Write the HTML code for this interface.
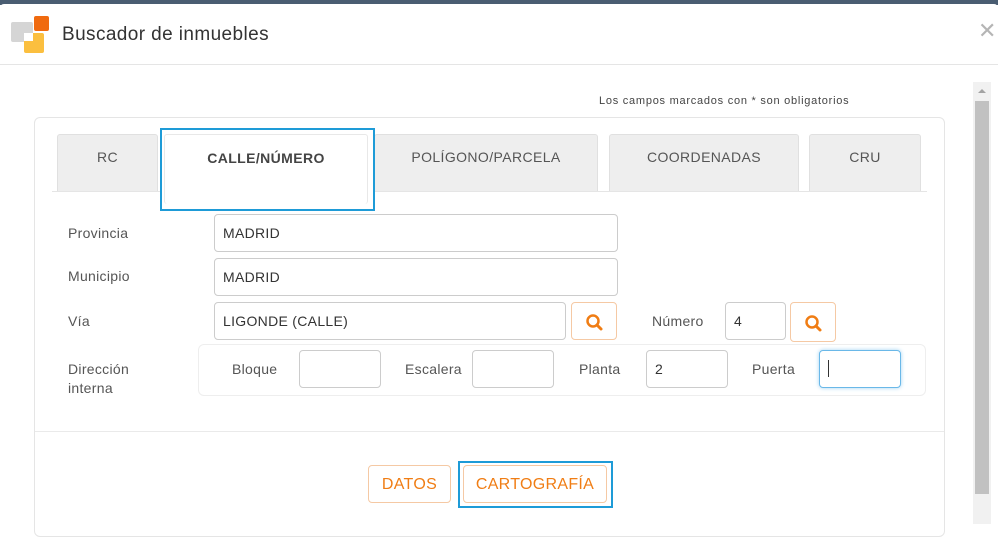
<!DOCTYPE html>
<html><head><style>
*{box-sizing:border-box;margin:0;padding:0}
body{width:998px;height:524px;overflow:hidden;background:#fff;font-family:"Liberation Sans","DejaVu Sans",sans-serif;position:relative;color:#444}
.abs{position:absolute}
.top{left:0;top:0;width:998px;height:5px;background:#4a5d72}
.modal{left:0;top:4px;width:998px;height:520px;background:#fff;border-radius:4px 4px 0 0}
.hdr{left:0;top:64px;width:998px;height:1px;background:#e5e5e5}
.tab{background:#eeeeee;border:1px solid #e0e0e0;border-bottom:none;border-radius:3px 3px 0 0;font-size:14px;color:#555;text-align:center;padding-top:14px;height:57px;letter-spacing:0.4px}
.inp{border:1px solid #ccc;border-radius:4px;height:38px;font-size:14px;color:#333;padding:10px 8px;background:#fff;letter-spacing:0.3px}
.lbl{font-size:14px;color:#555;letter-spacing:0.3px}
.sb{border:1px solid #f5c9a4;border-radius:4px;width:46px;height:38px;background:#fff}
.btn{border:1px solid #f5c9a4;border-radius:4px;color:#f07d14;font-size:16px;text-align:center;background:#fff;letter-spacing:0.3px}
</style></head><body>
<div class="abs top"></div>
<div class="abs modal"></div>
<div class="abs" style="left:11px;top:22px;width:22px;height:20px;background:#d5d5d5;border-radius:2px"></div>
<div class="abs" style="left:34px;top:16px;width:15px;height:15px;background:#f06a0f;border-radius:2px"></div>
<div class="abs" style="left:24px;top:33px;width:20px;height:20px;background:#fbbf3f;border-radius:2px"></div>
<div class="abs" style="left:24px;top:33px;width:9px;height:8px;background:#fff"></div>
<div class="abs" style="left:62px;top:24px;font-size:19px;color:#333;letter-spacing:0.4px">Buscador de inmuebles</div>
<div class="abs" style="left:978px;top:18px;font-size:22px;color:#b5b5b5">✕</div>
<div class="abs hdr"></div>
<div class="abs" style="left:973px;top:82px;width:18px;height:442px;background:#f1f1f1"></div>
<div class="abs" style="left:975px;top:101px;width:14px;height:393px;background:#c1c1c1"></div>
<div class="abs" style="left:978px;top:89px;width:0;height:0;border-left:4px solid transparent;border-right:4px solid transparent;border-bottom:4px solid #a3a3a3"></div>
<div class="abs" style="left:599px;top:95px;font-size:11px;color:#444;letter-spacing:0.75px">Los campos marcados con * son obligatorios</div>
<div class="abs" style="left:34px;top:117px;width:911px;height:420px;border:1px solid #e5e5e5;border-radius:6px"></div>
<div class="abs" style="left:52px;top:191px;width:875px;height:1px;background:#e5e5e5"></div>
<div class="abs tab" style="left:57px;top:134px;width:101px">RC</div>
<div class="abs tab" style="left:374px;top:134px;width:224px">POLÍGONO/PARCELA</div>
<div class="abs tab" style="left:609px;top:134px;width:190px">COORDENADAS</div>
<div class="abs tab" style="left:809px;top:134px;width:112px">CRU</div>
<div class="abs" style="left:160px;top:128px;width:215px;height:83px;border:2px solid #1e9bd7;background:#fff"></div>
<div class="abs" style="left:164px;top:134px;width:204px;height:70px;border:1px solid #e8e8e8;border-bottom:none;border-radius:3px;font-weight:bold;font-size:14px;color:#444;text-align:center;padding-top:15px;letter-spacing:0.4px">CALLE/NÚMERO</div>
<div class="abs lbl" style="left:68px;top:225px">Provincia</div>
<div class="abs inp" style="left:214px;top:214px;width:404px">MADRID</div>
<div class="abs lbl" style="left:68px;top:268px">Municipio</div>
<div class="abs inp" style="left:214px;top:258px;width:404px">MADRID</div>
<div class="abs lbl" style="left:68px;top:313px">Vía</div>
<div class="abs inp" style="left:214px;top:302px;width:352px">LIGONDE (CALLE)</div>
<div class="abs sb" style="left:571px;top:302px"><svg width="46" height="38"><circle cx="21" cy="18" r="5.5" fill="none" stroke="#f07d14" stroke-width="2.5"/><line x1="25" y1="22" x2="29" y2="26" stroke="#f07d14" stroke-width="3" stroke-linecap="round"/></svg></div>
<div class="abs lbl" style="left:652px;top:313px">Número</div>
<div class="abs inp" style="left:725px;top:302px;width:61px">4</div>
<div class="abs sb" style="left:790px;top:302px;height:40px"><svg width="46" height="38"><circle cx="21" cy="19" r="5.5" fill="none" stroke="#f07d14" stroke-width="2.5"/><line x1="25" y1="23" x2="29" y2="27" stroke="#f07d14" stroke-width="3" stroke-linecap="round"/></svg></div>
<div class="abs lbl" style="left:68px;top:360px;line-height:19px">Dirección<br>interna</div>
<div class="abs" style="left:198px;top:344px;width:728px;height:52px;border:1px solid #eee;border-radius:6px"></div>
<div class="abs lbl" style="left:232px;top:361px">Bloque</div>
<div class="abs inp" style="left:299px;top:350px;width:82px"></div>
<div class="abs lbl" style="left:405px;top:361px">Escalera</div>
<div class="abs inp" style="left:472px;top:350px;width:82px"></div>
<div class="abs lbl" style="left:579px;top:361px">Planta</div>
<div class="abs inp" style="left:646px;top:350px;width:82px">2</div>
<div class="abs lbl" style="left:752px;top:361px">Puerta</div>
<div class="abs inp" style="left:819px;top:350px;width:82px;border-color:#6ab8e8;box-shadow:0 0 4px #9fd3f3"><span style="display:block;width:1px;height:17px;background:#333;margin-top:-1px"></span></div>
<div class="abs" style="left:35px;top:431px;width:909px;height:1px;background:#eaeaea"></div>
<div class="abs btn" style="left:368px;top:465px;width:83px;height:38px;padding-top:10px">DATOS</div>
<div class="abs" style="left:458px;top:461px;width:155px;height:47px;border:2px solid #1e9bd7"></div>
<div class="abs btn" style="left:463px;top:465px;width:144px;height:38px;padding-top:10px">CARTOGRAFÍA</div>
</body></html>
